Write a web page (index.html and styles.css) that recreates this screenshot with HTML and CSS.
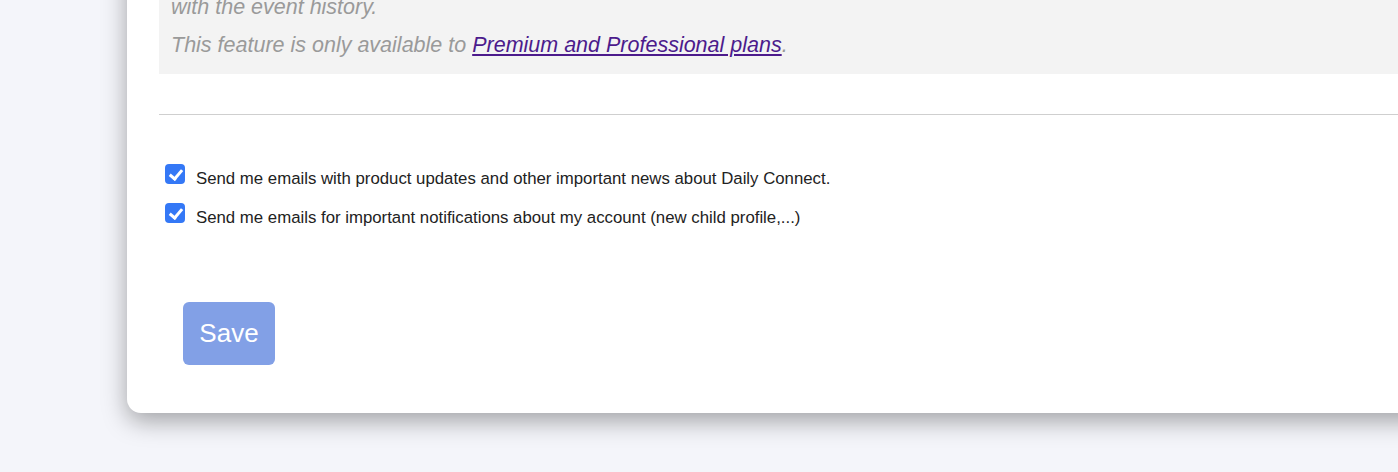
FILE: index.html
```html
<!DOCTYPE html>
<html>
<head>
<meta charset="utf-8">
<link rel="stylesheet" href="styles.css">
</head>
<body>
<div class="page">
  <div class="card">
    <div class="notice">
      <p>Track every activity and keep your records in sync<br>with the event history.</p>
      <p>This feature is only available to <a href="#" class="plans">Premium and Professional plans</a>.</p>
    </div>
    <hr class="sep">
    <div class="prefs">
      <label class="pref"><input type="checkbox" checked><span>Send me emails with product updates and other important news about Daily Connect.</span></label>
      <label class="pref"><input type="checkbox" checked><span>Send me emails for important notifications about my account (new child profile,...)</span></label>
    </div>
    <div class="actions">
      <button class="save" type="button">Save</button>
    </div>
  </div>
</div>
</body>
</html>
```

FILE: styles.css
```css
html, body {
  margin: 0;
  padding: 0;
  height: 100%;
  overflow: hidden;
}
body {
  background: #f4f5fa;
  font-family: "Liberation Sans", Arial, Helvetica, sans-serif;
}
.page {
  padding-left: 127px;
}
.card {
  width: 1400px;
  margin-top: -50px;
  background: #fff;
  border-radius: 14px;
  box-shadow: 0 8px 24px rgba(0, 0, 0, 0.34);
  padding: 0 0 48px 32px;
}
.notice {
  background: #f3f3f3;
  padding: 12px 12px 14px 12px;
  color: #9a9a9a;
  font-style: italic;
  font-size: 21.5px;
  line-height: 30px;
}
.notice p {
  margin: 0 0 8px 0;
}
.notice p:last-child {
  margin-bottom: 0;
}
.plans {
  color: #4c1b8c;
  text-decoration: underline;
}
.sep {
  border: 0;
  border-top: 1px solid #cfcfcf;
  margin: 40px 0 0 0;
}
.prefs {
  padding: 49px 0 0 6px;
  display: flex;
  flex-direction: column;
  gap: 14px;
}
.pref {
  display: flex;
  align-items: flex-start;
  gap: 11px;
  font-size: 16.8px;
  color: #222;
  line-height: 20px;
}
.pref span {
  padding-top: 5px;
}
.pref input {
  appearance: none;
  -webkit-appearance: none;
  width: 20px;
  height: 20px;
  margin: 0;
  border-radius: 4px;
  background: #3478f6;
  position: relative;
  flex: none;
}
.pref input::after {
  content: "";
  position: absolute;
  left: 7px;
  top: 2.5px;
  width: 5px;
  height: 10px;
  border-right: 3px solid #fff;
  border-bottom: 3px solid #fff;
  transform: rotate(40deg);
}
.actions {
  padding: 74px 0 0 24px;
}
.save {
  width: 92px;
  height: 63px;
  background: #82a0e6;
  color: #fff;
  border: 0;
  border-radius: 6px;
  font-family: "Liberation Sans", Arial, Helvetica, sans-serif;
  font-size: 26px;
  padding: 0;
}
```
